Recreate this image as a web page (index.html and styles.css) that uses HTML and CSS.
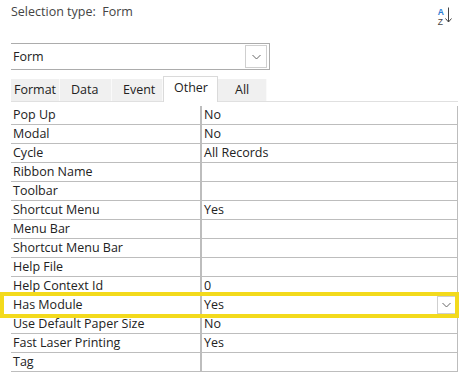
FILE: index.html
```html
<!DOCTYPE html>
<html lang="en">
<head>
    <meta charset="UTF-8">
    <title>Property Sheet</title>
    <link rel="stylesheet" href="styles.css">
</head>
<body>
    <div class="sheet">
        <div class="head">
            <span class="sel-type">Selection type:&nbsp; Form</span>
            <span class="sort">
                <span class="sort-letters"><span class="az-a">A</span><span class="az-z">Z</span></span>
                <svg width="7" height="16" viewBox="0 0 7 16"><path d="M3.5 0.5 V15 M0.5 11.5 L3.5 15 L6.5 11.5" fill="none" stroke="#444" stroke-width="1"/></svg>
            </span>
        </div>

        <div class="combo">
            <span>Form</span>
            <span class="drop"><svg width="9" height="6" viewBox="0 0 9 6"><path d="M0.5 1 L4.5 5 L8.5 1" fill="none" stroke="#666" stroke-width="1"/></svg></span>
        </div>

        <div class="tabs">
            <div class="tab" style="width: 49px">Format</div>
            <div class="tab" style="width: 52px">Data</div>
            <div class="tab" style="width: 51px">Event</div>
            <div class="tab active" style="width: 55px">Other</div>
            <div class="tab" style="width: 49px">All</div>
        </div>

        <div class="props" id="props"></div>
    </div>

    <script>
        const rows = [
            ['Pop Up', 'No'],
            ['Modal', 'No'],
            ['Cycle', 'All Records'],
            ['Ribbon Name', ''],
            ['Toolbar', ''],
            ['Shortcut Menu', 'Yes'],
            ['Menu Bar', ''],
            ['Shortcut Menu Bar', ''],
            ['Help File', ''],
            ['Help Context Id', '0'],
            ['Has Module', 'Yes'],
            ['Use Default Paper Size', 'No'],
            ['Fast Laser Printing', 'Yes'],
            ['Tag', '']
        ];

        const props = document.getElementById('props');
        rows.forEach(function(r) {
            const row = document.createElement('div');
            row.className = 'row';
            const name = document.createElement('div');
            name.className = 'name';
            name.textContent = r[0];
            const val = document.createElement('div');
            val.className = 'val';
            val.textContent = r[1];
            row.appendChild(name);
            row.appendChild(val);
            if (r[0] === 'Has Module') {
                row.classList.add('picked');
                const drop = document.createElement('span');
                drop.className = 'drop small';
                drop.innerHTML = '<svg width="9" height="6" viewBox="0 0 9 6"><path d="M0.5 1 L4.5 5 L8.5 1" fill="none" stroke="#666" stroke-width="1"/></svg>';
                val.appendChild(drop);
            }
            props.appendChild(row);
        });
    </script>
</body>
</html>
```

FILE: styles.css
```css
body {
    margin: 0;
    background: #fff;
    font-family: "Open Sans", "Noto Sans", sans-serif;
    font-size: 12.5px;
    color: #222;
}
.sheet {
    width: 447px;
    padding: 0 3px 0 11px;
}
.head {
    height: 43px;
    display: flex;
    justify-content: space-between;
    align-items: flex-start;
}
.sel-type {
    margin-top: 3px;
    line-height: 18px;
    color: #444;
}
.sort {
    display: flex;
    align-items: flex-start;
    margin: 7px 6px 0 0;
    gap: 1px;
}
.sort-letters {
    display: flex;
    flex-direction: column;
    font-family: "Liberation Sans", sans-serif;
    font-size: 8.5px;
    line-height: 10px;
}
.az-a {
    color: #2b7cd3;
    font-weight: bold;
}
.az-z {
    color: #444;
}
.combo {
    width: 256px;
    height: 25px;
    border-top: 1px solid #acacac;
    border-bottom: 1px solid #acacac;
    border-right: 1px solid #acacac;
    display: flex;
    align-items: center;
    justify-content: space-between;
    padding-left: 2px;
}
.drop {
    width: 20px;
    height: 21px;
    margin-right: 2px;
    border: 1px solid #cfcfcf;
    display: flex;
    align-items: center;
    justify-content: center;
    background: #fff;
}
.drop.small {
    width: 17px;
    height: 16px;
    margin-right: 1px;
}
.tabs {
    display: flex;
    align-items: flex-end;
    height: 25px;
    margin-top: 6px;
    border-bottom: 1px solid #e0e0e0;
}
.tab {
    height: 22px;
    line-height: 22px;
    background: #f0f0f0;
    border-right: 1px solid #fafafa;
    box-sizing: border-box;
    padding-left: 3px;
}
.tab:nth-child(2), .tab:nth-child(3) {
    padding-left: 11px;
}
.tab:nth-child(5) {
    padding-left: 17px;
}
.tab.active {
    height: 26px;
    line-height: 22px;
    background: #fff;
    border: 1px solid #dadada;
    border-bottom: none;
    margin-bottom: -1px;
    padding-left: 10px;
}
.props {
    margin-top: 4px;
}
.row {
    display: grid;
    grid-template-columns: 191px 1fr;
    height: 19px;
    box-sizing: border-box;
    border-bottom: 1px solid #bdbdbd;
    line-height: 18px;
}
.name {
    padding-left: 2px;
    border-right: 2px solid #bdbdbd;
}
.val {
    padding-left: 2px;
    border-right: 1px solid #bdbdbd;
    display: flex;
    justify-content: space-between;
    align-items: center;
}
.picked {
    position: relative;
}
.picked::after {
    content: "";
    position: absolute;
    left: -11px;
    right: -1px;
    top: -4px;
    bottom: -4px;
    border: 4px solid #f3da1c;
    pointer-events: none;
}
```
